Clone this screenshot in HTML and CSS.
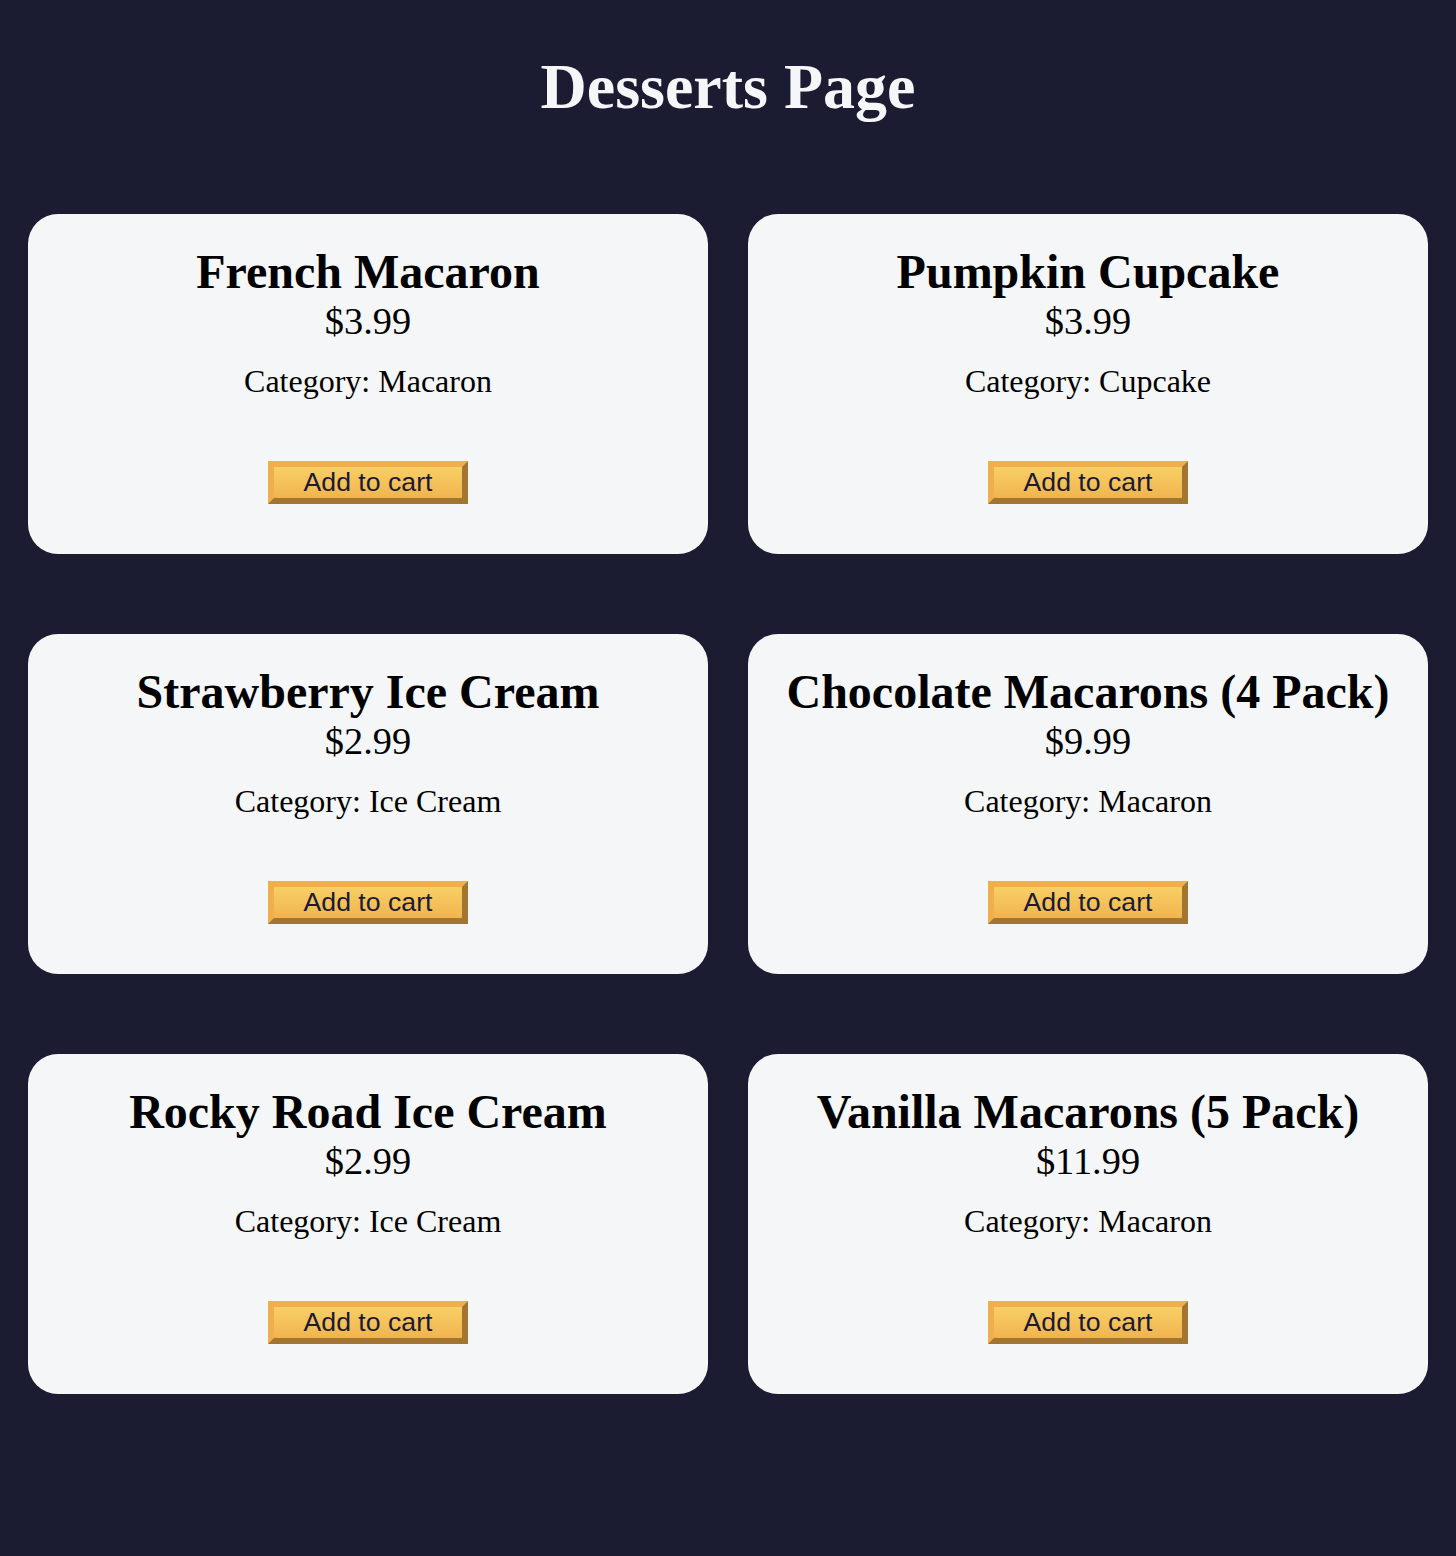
FILE: index.html
```html
<!DOCTYPE html>
<html lang="en">
<head>
<meta charset="utf-8">
<title>Desserts Page</title>
<link rel="stylesheet" href="styles.css">
</head>
<body>
<h1 class="title">Desserts Page</h1>
<main class="dessert-card-container">
  <div class="dessert-card">
    <h2 class="dessert-name">French Macaron</h2>
    <p class="dessert-price">$3.99</p>
    <p class="product-category">Category: Macaron</p>
    <button class="btn add-to-cart-btn">Add to cart</button>
  </div>
  <div class="dessert-card">
    <h2 class="dessert-name">Pumpkin Cupcake</h2>
    <p class="dessert-price">$3.99</p>
    <p class="product-category">Category: Cupcake</p>
    <button class="btn add-to-cart-btn">Add to cart</button>
  </div>
  <div class="dessert-card">
    <h2 class="dessert-name">Strawberry Ice Cream</h2>
    <p class="dessert-price">$2.99</p>
    <p class="product-category">Category: Ice Cream</p>
    <button class="btn add-to-cart-btn">Add to cart</button>
  </div>
  <div class="dessert-card">
    <h2 class="dessert-name">Chocolate Macarons (4 Pack)</h2>
    <p class="dessert-price">$9.99</p>
    <p class="product-category">Category: Macaron</p>
    <button class="btn add-to-cart-btn">Add to cart</button>
  </div>
  <div class="dessert-card">
    <h2 class="dessert-name">Rocky Road Ice Cream</h2>
    <p class="dessert-price">$2.99</p>
    <p class="product-category">Category: Ice Cream</p>
    <button class="btn add-to-cart-btn">Add to cart</button>
  </div>
  <div class="dessert-card">
    <h2 class="dessert-name">Vanilla Macarons (5 Pack)</h2>
    <p class="dessert-price">$11.99</p>
    <p class="product-category">Category: Macaron</p>
    <button class="btn add-to-cart-btn">Add to cart</button>
  </div>
</main>
</body>
</html>
```
FILE: styles.css
```css
*, *::before, *::after {
  margin: 0;
  padding: 0;
  box-sizing: border-box;
}

body {
  background-color: #1b1b32;
  font-family: "Liberation Serif", "Times New Roman", serif;
  min-height: 1556px;
}

.title {
  color: #f5f6f7;
  text-align: center;
  font-size: 64px;
  font-weight: bold;
  line-height: 74px;
  margin: 50px 0 50px;
}

.dessert-card-container {
  display: grid;
  grid-template-columns: 1fr 1fr;
  column-gap: 40px;
  row-gap: 80px;
  padding: 40px 28px;
}

.dessert-card {
  background-color: #f5f6f7;
  color: #000;
  border-radius: 30px;
  padding: 30px;
  text-align: center;
  height: 340px;
}

.dessert-name {
  font-size: 48px;
  line-height: 55px;
  font-weight: bold;
}

.dessert-price {
  font-size: 38.4px;
  line-height: 44px;
}

.product-category {
  font-size: 32px;
  line-height: 37px;
  margin: 20px 0;
}

.btn {
  display: block;
  width: 200px;
  height: 43px;
  margin: 61px auto 19px;
  padding: 0;
  font-family: "Liberation Sans", Arial, sans-serif;
  font-size: 26.67px;
  line-height: 31px;
  color: #1b1b32;
  background-color: #feac32;
  background-image: linear-gradient(#f8cf66, #f1b44f);
  border-style: solid;
  border-width: 6px;
  border-color: #f0ae4c #a27533 #a27533 #f0ae4c;
  cursor: pointer;
}
```
